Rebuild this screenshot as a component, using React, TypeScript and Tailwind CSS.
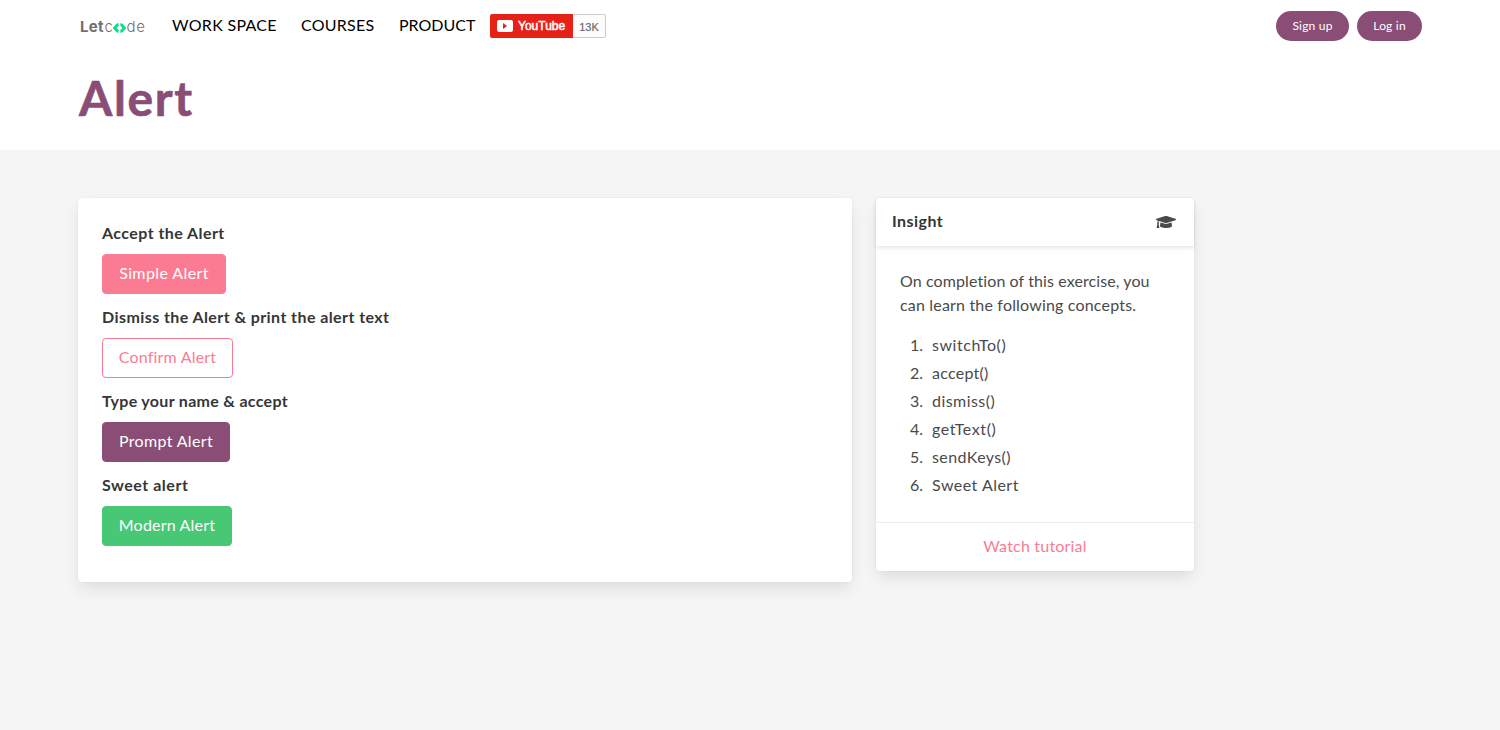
import React from "react";
import { FaGraduationCap } from "react-icons/fa";

const exercises = [
  {
    label: "Accept the Alert",
    labelClass: "tracking-[0.43px]",
    button: "Simple Alert",
    buttonClass: "w-[124px] border-[#fb7c92] bg-[#fb7c92] text-white tracking-[0.4px]",
  },
  {
    label: "Dismiss the Alert & print the alert text",
    labelClass: "tracking-[0.42px]",
    button: "Confirm Alert",
    buttonClass: "w-[131px] border-[#fb7c92] bg-white text-[#fb7c92] tracking-[0.2px]",
  },
  {
    label: "Type your name & accept",
    labelClass: "tracking-[0.31px]",
    button: "Prompt Alert",
    buttonClass: "w-[128px] border-[#8a4d76] bg-[#8a4d76] text-white tracking-[0.34px]",
  },
  {
    label: "Sweet alert",
    labelClass: "tracking-[0.52px]",
    button: "Modern Alert",
    buttonClass: "w-[130px] border-[#48c774] bg-[#48c774] text-white tracking-[0.2px]",
  },
];

const concepts = [
  { name: "switchTo()", spacing: "tracking-[0.55px]" },
  { name: "accept()", spacing: "tracking-[0.25px]" },
  { name: "dismiss()", spacing: "tracking-[0.45px]" },
  { name: "getText()", spacing: "tracking-[0.6px]" },
  { name: "sendKeys()", spacing: "tracking-[0.4px]" },
  { name: "Sweet Alert", spacing: "tracking-[0.48px]" },
];

const cardClass =
  "rounded bg-white shadow-[0_8px_16px_-2px_rgba(10,10,10,0.1),0_0_0_1px_rgba(10,10,10,0.02)]";

function Logo() {
  return (
    <a className="flex w-[70px] items-center pt-0.5 font-['Inter',sans-serif] text-[15px] leading-5 text-[#707070]">
      <span className="w-[26.5px] pl-[2px] font-bold tracking-[0.3px]">Let</span>
      <span className="w-[8px] font-light">c</span>
      <svg className="mt-px h-[10px] w-[13px] shrink-0" viewBox="0 0 13 10" fill="none" stroke="#0bdc8a" strokeWidth="3">
        <path d="M5.6 1.5C3.2 1.7 3.3 3.8 1.8 5C3.3 6.2 3.2 8.3 5.6 8.5" />
        <path d="M7.4 1.5C9.8 1.7 9.7 3.8 11.2 5C9.7 6.2 9.8 8.3 7.4 8.5" />
      </svg>
      <span className="pl-px font-light tracking-[0.6px]">de</span>
    </a>
  );
}

function YouTubeBadge() {
  return (
    <a className="ml-[15px] flex h-6 w-[116px] font-['Liberation_Sans',Arial,sans-serif] text-[12px] leading-6">
      <span className="flex w-[83px] items-center rounded-l-[2px] bg-[#e62117] pl-[7px] font-normal text-white">
        <svg className="mr-[5px] h-3 w-4" viewBox="0 0 16 12">
          <rect width="16" height="12" rx="2" fill="#fff" />
          <path d="M6 3v6l4-3z" fill="#e62117" />
        </svg>
        <span className="[-webkit-text-stroke:0.5px_white]">YouTube</span>
      </span>
      <span className="flex flex-1 items-center justify-center rounded-r-[2px] border border-l-0 border-[#ccc] bg-[#fcfcfc] pt-0.5 text-[11px] text-[#666] [-webkit-text-stroke:0.2px_#777]">
        13K
      </span>
    </a>
  );
}

export default function App() {
  return (
    <div className="min-h-screen bg-[#f5f5f5] font-['Lato',sans-serif] text-base leading-6 text-[#4a4a4a]">
      <header className="h-[150px] bg-white px-[78px]">
        <nav className="flex h-[52px] items-center text-black">
          <Logo />
          <span className="ml-6 w-[105px] pb-0.5 whitespace-nowrap tracking-[0.3px]">WORK SPACE</span>
          <span className="ml-6 w-[74px] pb-0.5 whitespace-nowrap tracking-[0.25px]">COURSES</span>
          <span className="ml-6 w-[76px] pb-0.5 whitespace-nowrap">PRODUCT</span>
          <YouTubeBadge />
          <div className="ml-auto flex gap-2 text-[12px] text-white">
            <button className="h-[30px] w-[73px] rounded-full bg-[#8a4d76] tracking-[0.2px]">Sign up</button>
            <button className="h-[30px] w-[65px] rounded-full bg-[#8a4d76] tracking-[0.2px]">Log in</button>
          </div>
        </nav>
        <h1 className="pt-[19px] pl-px text-[48px] leading-[54px] font-bold tracking-[1.6px] text-[#8a4d76] [-webkit-text-stroke:0.6px_#8a4d76] [stroke-linejoin:round]">
          Alert
        </h1>
      </header>

      <main className="flex items-start gap-6 px-[78px] pt-12">
        <section className={`${cardClass} h-[384px] w-[774px] px-6 pt-[23px]`}>
          {exercises.map((item) => (
            <div key={item.label} className="mb-[11px]">
              <div className={`mb-[9px] font-bold text-[#363636] ${item.labelClass}`}>{item.label}</div>
              <button
                className={`flex h-10 items-center justify-center rounded border pb-0.5 whitespace-nowrap ${item.buttonClass}`}
              >
                {item.button}
              </button>
            </div>
          ))}
        </section>

        <section className={`${cardClass} w-[318px]`}>
          <header className="flex h-12 items-center justify-between pr-[18px] pl-4 shadow-[0_2px_4px_rgba(10,10,10,0.1)]">
            <span className="pb-0.5 font-bold tracking-[0.45px] text-[#363636]">Insight</span>
            <FaGraduationCap className="h-4 w-5" />
          </header>
          <div className="px-6 pt-[23px] pb-[25px]">
            <p className="whitespace-nowrap tracking-[0.1px]">
              On completion of this exercise, you
              <br />
              <span className="tracking-[0.18px]">can learn the following concepts.</span>
            </p>
            <ol className="mt-4 flex flex-col gap-1">
              {concepts.map((concept, index) => (
                <li key={concept.name} className="flex">
                  <span className="w-8 pr-[9px] text-right">{index + 1}.</span>
                  <span className={concept.spacing}>{concept.name}</span>
                </li>
              ))}
            </ol>
          </div>
          <footer className="flex h-[49px] items-center justify-center border-t border-[#ededed] pb-0.5 tracking-[0.2px] text-[#fb7c92]">
            Watch tutorial
          </footer>
        </section>
      </main>
    </div>
  );
}
